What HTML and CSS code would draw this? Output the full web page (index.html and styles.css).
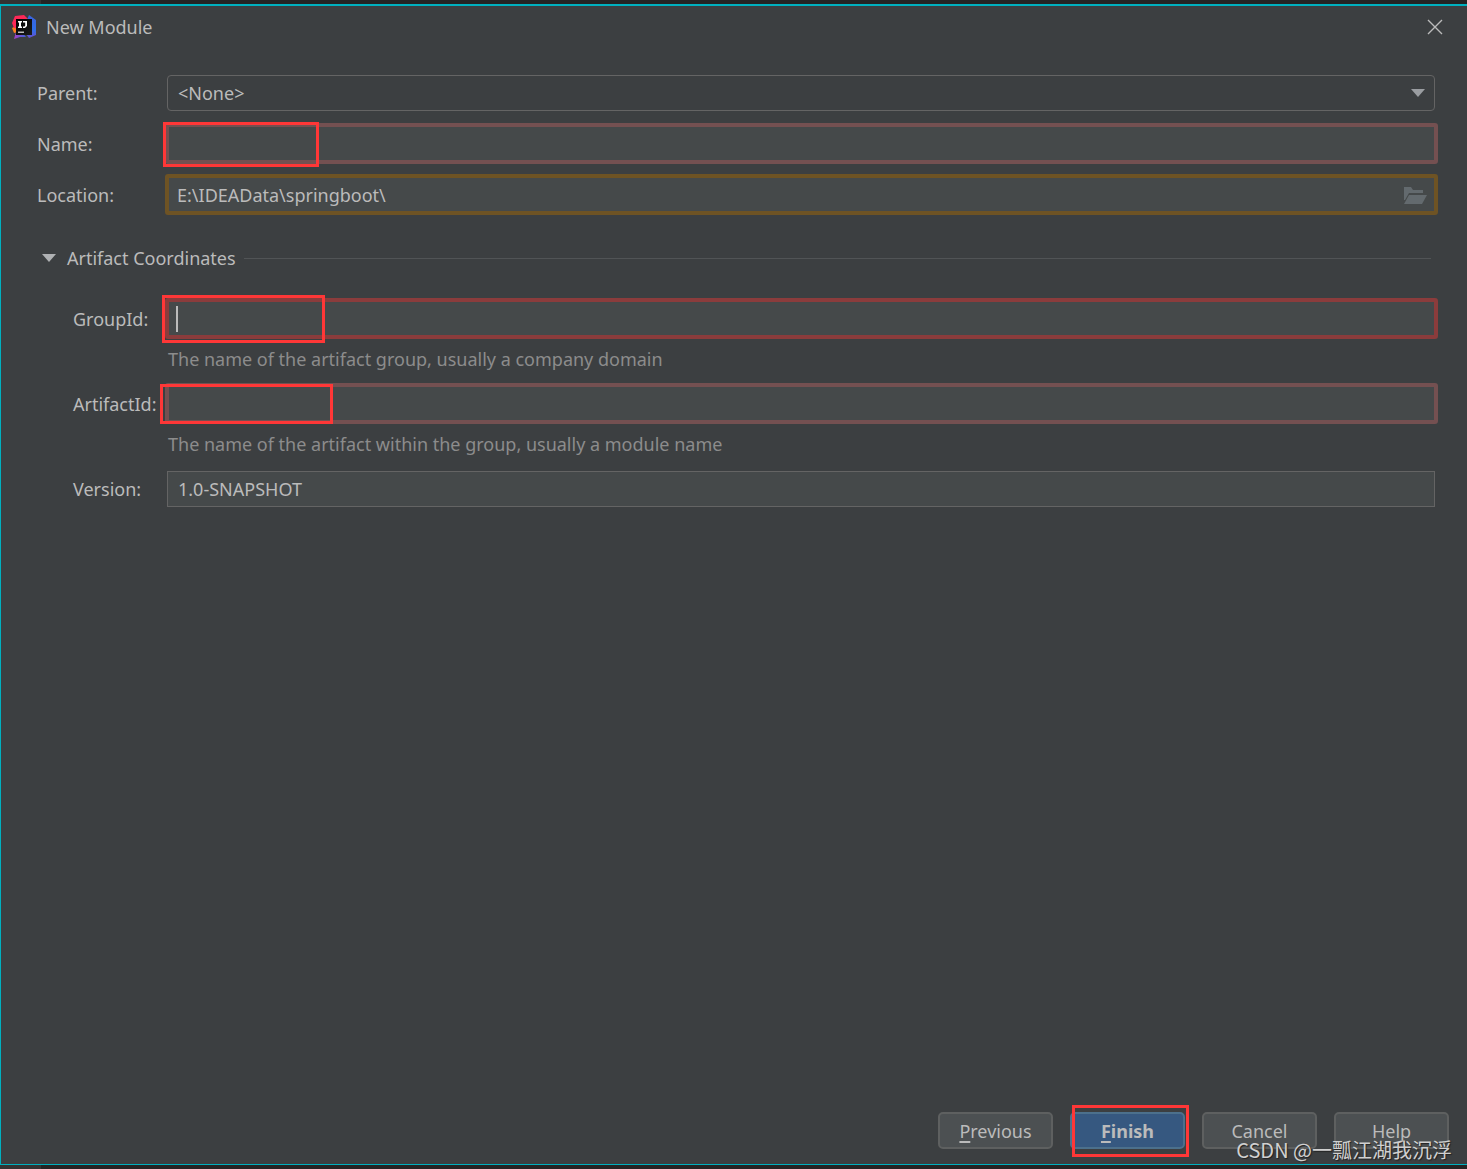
FILE: index.html
```html
<!DOCTYPE html>
<html lang="en">
<head>
<meta charset="utf-8">
<title>New Module</title>
<meta name="viewport" content="width=device-width, initial-scale=1">
<link rel="stylesheet" href="styles.css">
</head>
<body>
<main class="dialog">
  <header class="titlebar">
    <svg class="logo" viewBox="0 0 24 24" aria-hidden="true">
      <defs>
        <linearGradient id="right" x1="0" y1="0" x2="0" y2="1"><stop offset="0" stop-color="#3b62dc"/><stop offset=".65" stop-color="#2f6fe8"/><stop offset="1" stop-color="#6a4fd0"/></linearGradient>
        <linearGradient id="bottom" x1="0" y1="0" x2="1" y2="0"><stop offset="0" stop-color="#a93fc4"/><stop offset="1" stop-color="#3a62e0"/></linearGradient>
        <linearGradient id="tile" x1="0" y1="0" x2="1" y2="1"><stop offset="0" stop-color="#000"/><stop offset="1" stop-color="#1c1c1c"/></linearGradient>
      </defs>
      <path d="M0 13l4-2 3 6-5 1z" fill="#fc801d"/>
      <path d="M3 1l9-1 5 5-3 10-12-2-2-5z" fill="#fe2857"/>
      <path d="M17 0l7 5v15l-7 3-6-8z" fill="url(#right)"/>
      <path d="M4 17h6l4 5-6 0-6 2z" fill="url(#bottom)"/>
      <rect x="4" y="4" width="16" height="16" fill="url(#tile)"/>
      <path d="M6 6h4v1.500H9v4h1V13H6v-1.500h1v-4H6zM11 6h4v5l-2 2h-2v-1.500h1.500l.7-.7V7.500H11z" fill="#fff"/>
      <path d="M6 16.500h6v1.500H6z" fill="#bbb"/>
    </svg>
    <h1 class="title">New Module</h1>
    <button class="close" type="button" aria-label="Close">
      <svg viewBox="0 0 16 16" aria-hidden="true"><path d="M1 1l14 14M15 1L1 15"/></svg>
    </button>
  </header>

  <form class="form">
    <div class="row">
      <label for="parent">Parent:</label>
      <div class="field">
        <select id="parent" class="control select"><option>&lt;None&gt;</option></select>
        <svg class="arrow select-arrow" viewBox="0 0 14 8" aria-hidden="true"><path d="M0 0h14L7 8z"/></svg>
      </div>
    </div>
    <div class="row">
      <label for="name">Name:</label>
      <div class="field">
        <input id="name" class="control error" type="text">
        <span class="mark mark-name"></span>
      </div>
    </div>
    <div class="row">
      <label for="location">Location:</label>
      <div class="field">
        <input id="location" class="control warning" type="text" value="E:\IDEAData\springboot\">
        <button class="browse" type="button" aria-label="Browse">
          <svg viewBox="0 0 24 18" aria-hidden="true"><path d="M1 1h7l2 3h10v3H6L2 14H1z"/><path d="M6 9h18l-5 9H1z"/></svg>
        </button>
      </div>
    </div>

    <section class="section">
      <h2 class="section-title">
        <svg class="arrow" viewBox="0 0 14 8" aria-hidden="true"><path d="M0 0h14L7 8z"/></svg>
        Artifact Coordinates
      </h2>
      <div class="row nested">
        <label for="group">GroupId:</label>
        <div class="field">
          <input id="group" class="control error focused" type="text">
          <span class="caret"></span>
          <span class="mark mark-group"></span>
        </div>
      </div>
      <p class="hint">The name of the artifact group, usually a company domain</p>
      <div class="row nested">
        <label for="artifact">ArtifactId:</label>
        <div class="field">
          <input id="artifact" class="control error" type="text">
          <span class="mark mark-artifact"></span>
        </div>
      </div>
      <p class="hint">The name of the artifact within the group, usually a module name</p>
      <div class="row nested">
        <label for="version">Version:</label>
        <div class="field">
          <input id="version" class="control plain" type="text" value="1.0-SNAPSHOT">
        </div>
      </div>
    </section>
  </form>

  <footer class="actions">
    <button class="button" type="button"><u>P</u>revious</button>
    <div class="action">
      <button class="button primary" type="button"><u>F</u>inish</button>
      <span class="mark mark-finish"></span>
    </div>
    <button class="button" type="button">Cancel</button>
    <button class="button" type="button">Help</button>
    <span class="watermark">CSDN @一瓢江湖我沉浮</span>
  </footer>
</main>
</body>
</html>
```
FILE: styles.css
```css
* { box-sizing: border-box; }

body {
  margin: 0;
  min-height: 100vh;
  padding: 4px 0;
  display: flex;
  flex-direction: column;
  background: linear-gradient(90deg, #333 41px, #242424 41px);
  color: #bbb;
  font: 18px/24px "Noto Sans", "Open Sans", "Noto Sans CJK SC", sans-serif;
}

.dialog {
  flex: 1;
  display: flex;
  flex-direction: column;
  background: #3c3f41;
  border: 1px solid #00b0bf;
  border-top-width: 2px;
  border-right: 0;
}

.titlebar {
  display: flex;
  align-items: center;
  height: 42px;
  padding: 0 24px 0 11px;
}

.logo { width: 24px; height: 24px; }

.title {
  flex: 1;
  margin: 0 0 0 10px;
  font-size: 18px;
  font-weight: 400;
}

button, input, select { font: inherit; color: inherit; }

.close {
  width: 16px;
  height: 16px;
  padding: 0;
  border: 0;
  background: none;
}

.close svg {
  display: block;
  fill: none;
  stroke: #bbb;
  stroke-width: 1.400;
}

.form {
  flex: 1;
  display: flex;
  flex-direction: column;
  gap: 10px;
  padding: 24px 29px 24px 36px;
}

.row {
  display: grid;
  grid-template-columns: 128px 1fr;
  align-items: center;
}

.nested {
  grid-template-columns: 92px 1fr;
  margin-left: 36px;
}

.row label { white-space: nowrap; }

.field {
  position: relative;
  display: flex;
  align-items: center;
  height: 41px;
}

.control {
  flex: 1;
  min-width: 0;
  height: 41px;
  padding: 0 8px;
  border: 4px solid #646464;
  border-radius: 3px;
  background: #45494a;
  outline: 0;
}

.error { border-color: #745051; }
.error.focused { border-color: #8b3c3c; }
.warning { border-color: #6e5324; }

.select, .plain {
  height: 36px;
  margin: 0 3px 0 2px;
  padding: 0 10px;
  border: 1px solid #646464;
  border-radius: 0;
}

.select {
  appearance: none;
  border-radius: 4px;
  background: #3c3f41;
}

.arrow { width: 14px; height: 8px; fill: #afb1b3; }

.select-arrow {
  position: absolute;
  right: 13px;
  fill: #9a9da1;
  pointer-events: none;
}

.browse {
  position: absolute;
  right: 11px;
  width: 24px;
  height: 18px;
  padding: 0;
  border: 0;
  background: none;
}

.browse svg { display: block; fill: #636a6e; }

.caret {
  position: absolute;
  left: 11px;
  width: 2px;
  height: 26px;
  background: #bbb;
}

.section { margin-top: 21px; }

.section-title {
  display: flex;
  align-items: center;
  gap: 11px;
  margin: 0 7px 28px 5px;
  font-size: 18px;
  font-weight: 400;
}

.section-title::after {
  content: "";
  flex: 1;
  height: 1px;
  margin-left: -3px;
  background: #515456;
}

.hint {
  margin: 0;
  padding: 8px 0 12px 131px;
  color: #8c8c8c;
}

/* Red call-outs drawn over the controls to fill in */
.mark {
  position: absolute;
  border: 3px solid #ff3737;
  pointer-events: none;
}

.mark-name { left: -2px; top: -1px; width: 156px; height: 45px; }
.mark-group { left: -3px; top: -3px; width: 163px; height: 48px; }
.mark-artifact { left: -5px; top: 1px; width: 173px; height: 40px; }
.mark-finish { left: 2px; top: -7px; width: 117px; height: 52px; }

.actions {
  position: relative;
  display: flex;
  justify-content: flex-end;
  gap: 17px;
  padding: 0 18px 15px;
}

.action { position: relative; }

.button {
  width: 115px;
  height: 37px;
  padding: 0;
  border: 2px solid #5e6060;
  border-radius: 5px;
  background: #4c5052;
}

.primary {
  border-color: #4c708c;
  background: #365880;
  font-weight: 700;
}

.button u {
  text-decoration-thickness: 2px;
  text-underline-offset: 3px;
}

.watermark {
  position: absolute;
  right: 15px;
  bottom: 0;
  color: #d0d0d0;
  font: 20px/28px "Noto Sans CJK SC", sans-serif;
  text-shadow: 1px 1px 1px #222;
  white-space: nowrap;
}
```
